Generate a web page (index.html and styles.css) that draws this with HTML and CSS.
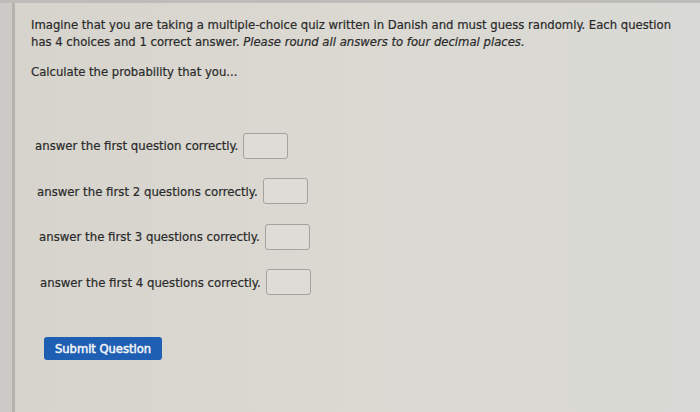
FILE: index.html
```html
<!DOCTYPE html>
<html>
<head>
<meta charset="utf-8">
<link rel="stylesheet" href="styles.css">
</head>
<body>
<div class="frame">
  <div class="side"></div>
  <div class="page">
    <p class="intro">Imagine that you are taking a multiple-choice quiz written in Danish and must guess randomly. Each question has 4 choices and 1 correct answer. <em>Please round all answers to four decimal places.</em></p>
    <p class="calc">Calculate the probability that you...</p>
    <div class="rows">
      <div class="row r1"><span>answer the first question correctly.</span><span class="box"></span></div>
      <div class="row r2"><span>answer the first 2 questions correctly.</span><span class="box"></span></div>
      <div class="row r3"><span>answer the first 3 questions correctly.</span><span class="box"></span></div>
      <div class="row r4"><span>answer the first 4 questions correctly.</span><span class="box"></span></div>
    </div>
    <button class="submit">Submit Question</button>
  </div>
</div>
</body>
</html>
```
FILE: styles.css
```css
html, body {
  margin: 0;
  padding: 0;
  width: 700px;
  height: 412px;
  overflow: hidden;
  background: #d8d6cf;
}
.frame {
  display: flex;
  height: 412px;
  border-top: 3px solid #bdbcb8;
  box-sizing: border-box;
}
.side {
  width: 12px;
  background: #cbcac7;
  border-right: 3px solid #b5b3ae;
  flex: none;
}
.page {
  flex: 1;
  padding: 13px 0 0 16px;
  font-family: "DejaVu Sans Condensed", "DejaVu Sans", sans-serif;
  font-size: 12.95px;
  color: #2a2a2a;
  -webkit-text-stroke: 0.2px #2a2a2a;
  background: linear-gradient(90deg, #d6d4cd 0%, #dbd9d2 50%, #d9d9d5 100%);
}
p { margin: 0; line-height: 17px; }
.intro { width: 650px; }
.intro em { font-style: oblique; }
.calc { margin-top: 13px; }
.rows {
  margin-top: 52px;
  display: flex;
  flex-direction: column;
  gap: 18.5px;
  font-size: 13.05px;
}
.row {
  display: flex;
  align-items: center;
  gap: 5px;
  height: 27px;
}
.r1 { padding-left: 4px; }
.r2 { padding-left: 6px; }
.r3 { padding-left: 8px; }
.r4 { padding-left: 9px; }
.box {
  width: 43px;
  height: 24px;
  border: 1.5px solid #a3a29e;
  border-radius: 3px;
  background: #dddcd6;
}
.submit {
  margin: 41px 0 0 13px;
  background: #1f5fb3;
  color: #f2f4f8;
  border: none;
  border-radius: 3px;
  font-family: "DejaVu Sans Condensed", "DejaVu Sans", sans-serif;
  font-weight: normal;
  -webkit-text-stroke: 0.5px #f2f4f8;
  font-size: 12.8px;
  height: 23px;
  width: 118px;
  padding: 0;
}
```
